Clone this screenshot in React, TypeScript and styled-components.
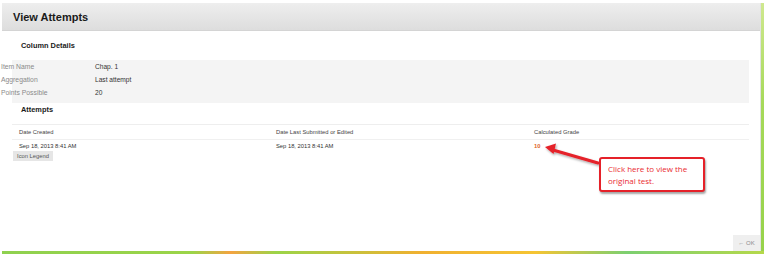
import React from "react";
import styled, { createGlobalStyle } from "styled-components";

const Global = createGlobalStyle`
  html, body { margin: 0; padding: 0; background: #ffffff; }
  body { font-family: "Liberation Sans", Arial, sans-serif; width: 768px; height: 257px; overflow: hidden; }
`;

const Stage = styled.div`
  position: relative;
  width: 768px;
  height: 257px;
  padding: 3px 0 0 2px;
  box-sizing: border-box;
`;

const Frame = styled.div`
  width: 762px;
  height: 251px;
  box-sizing: border-box;
  padding: 0 3px 3px 0;
  background:
    linear-gradient(to right, #8fd14f 0%, #9bd448 25%, #f4a340 30%, #9bd448 36%, #f0b030 55%, #f5c433 70%, #7ccf70 82%, #b5d84a 100%) bottom / 100% 3px no-repeat,
    linear-gradient(to bottom, #cfe88f 0%, #a6d95a 40%, #96d24a 100%) right / 3px 100% no-repeat;
`;

const Window = styled.div`
  position: relative;
  width: 100%;
  height: 100%;
  background: #ffffff;
  border-right: 1px solid #e2e2e2;
  box-sizing: border-box;
  display: flex;
  flex-direction: column;
`;

const Header = styled.div`
  height: 28px;
  flex: none;
  display: flex;
  align-items: center;
  padding-left: 11px;
  background: linear-gradient(to bottom, #eeeeee, #dddddd);
  border-bottom: 1px solid #d4d4d4;
  box-sizing: border-box;
`;

const Title = styled.h1`
  margin: 0;
  font-size: 11px;
  font-weight: bold;
  color: #1a1a1a;
`;

const SectionTitle = styled.h2<{ $top: number; $bottom: number }>`
  margin: ${(p) => p.$top}px 0 ${(p) => p.$bottom}px 19px;
  font-size: 7.4px;
  line-height: 10px;
  font-weight: bold;
  color: #1a1a1a;
`;

const DetailsBox = styled.div`
  width: 748px;
  margin-left: -1px;
  padding-bottom: 4px;
  background: linear-gradient(to right, transparent 11px, #f4f4f4 11px);
  display: grid;
  grid-template-columns: 94px 1fr;
  grid-auto-rows: 13px;
  align-items: center;
`;

const DetailLabel = styled.div`
  font-size: 6.8px;
  color: #8a8a8a;
`;

const DetailValue = styled.div`
  font-size: 6.6px;
  color: #333333;
`;

const Table = styled.div`
  margin-left: 10px;
  width: 737px;
  border-top: 1px solid #eeeeee;
  display: grid;
  grid-template-columns: 257px 258px 1fr;
`;

const HeadCell = styled.div`
  height: 14px;
  display: flex;
  align-items: center;
  padding-left: 7px;
  font-size: 5.8px;
  color: #444444;
  border-bottom: 1px solid #f0f0f0;
`;

const Cell = styled.div<{ $grade?: boolean }>`
  height: 11px;
  display: flex;
  align-items: center;
  padding-left: 7px;
  font-size: 5.8px;
  color: ${(p) => (p.$grade ? "#e0662a" : "#333333")};
  font-weight: ${(p) => (p.$grade ? "bold" : "normal")};
`;

const LegendButton = styled.button`
  margin: 0 0 0 11px;
  width: 40px;
  height: 10px;
  padding: 0;
  border: none;
  background: #e6e6e6;
  font-family: inherit;
  font-size: 5.8px;
  color: #555555;
  align-self: flex-start;
`;

const Footer = styled.div`
  margin-top: auto;
  display: flex;
  justify-content: flex-end;
`;

const OkButton = styled.button`
  width: 27px;
  height: 16px;
  padding: 0;
  border: none;
  background: #efefef;
  font-family: inherit;
  font-size: 6px;
  color: #8c8c8c;
`;

const Callout = styled.div`
  position: absolute;
  left: 599px;
  top: 157px;
  width: 106px;
  height: 35px;
  box-sizing: border-box;
  border: 2px solid #e52129;
  border-radius: 3px;
  background: #ffffff;
  box-shadow: 1px 2px 2px rgba(0, 0, 0, 0.35);
  padding: 4px 0 0 7px;
  font-family: "Open Sans", "Liberation Sans", sans-serif;
  font-size: 8px;
  line-height: 12px;
  color: #ea2a30;
`;

const Arrow = styled.svg`
  position: absolute;
  left: 540px;
  top: 140px;
  overflow: visible;
`;

export default function App() {
  return (
    <>
      <Global />
      <Stage>
        <Frame>
          <Window>
            <Header>
              <Title>View Attempts</Title>
            </Header>
            <SectionTitle $top={10} $bottom={9}>Column Details</SectionTitle>
            <DetailsBox>
              <DetailLabel>Item Name</DetailLabel>
              <DetailValue>Chap. 1</DetailValue>
              <DetailLabel>Aggregation</DetailLabel>
              <DetailValue>Last attempt</DetailValue>
              <DetailLabel>Points Possible</DetailLabel>
              <DetailValue>20</DetailValue>
            </DetailsBox>
            <SectionTitle $top={2} $bottom={9}>Attempts</SectionTitle>
            <Table>
              <HeadCell>Date Created</HeadCell>
              <HeadCell>Date Last Submitted or Edited</HeadCell>
              <HeadCell>Calculated Grade</HeadCell>
              <Cell>Sep 18, 2013 8:41 AM</Cell>
              <Cell>Sep 18, 2013 8:41 AM</Cell>
              <Cell $grade>10</Cell>
            </Table>
            <LegendButton>Icon Legend</LegendButton>
            <Footer>
              <OkButton>← OK</OkButton>
            </Footer>
          </Window>
        </Frame>
        <Arrow width="70" height="30" viewBox="0 0 70 30">
          <defs>
            <filter id="sh" x="-20%" y="-50%" width="140%" height="200%">
              <feDropShadow dx="1" dy="1.5" stdDeviation="0.8" floodColor="#000" floodOpacity="0.35" />
            </filter>
          </defs>
          <g filter="url(#sh)">
            <line x1="58" y1="23" x2="13" y2="10" stroke="#e52129" strokeWidth="3" strokeLinecap="round" />
            <polygon points="5,7 16,3.5 13.5,14" fill="#e52129" />
          </g>
        </Arrow>
        <Callout>
          Click here to view the
          <br />
          original test.
        </Callout>
      </Stage>
    </>
  );
}
